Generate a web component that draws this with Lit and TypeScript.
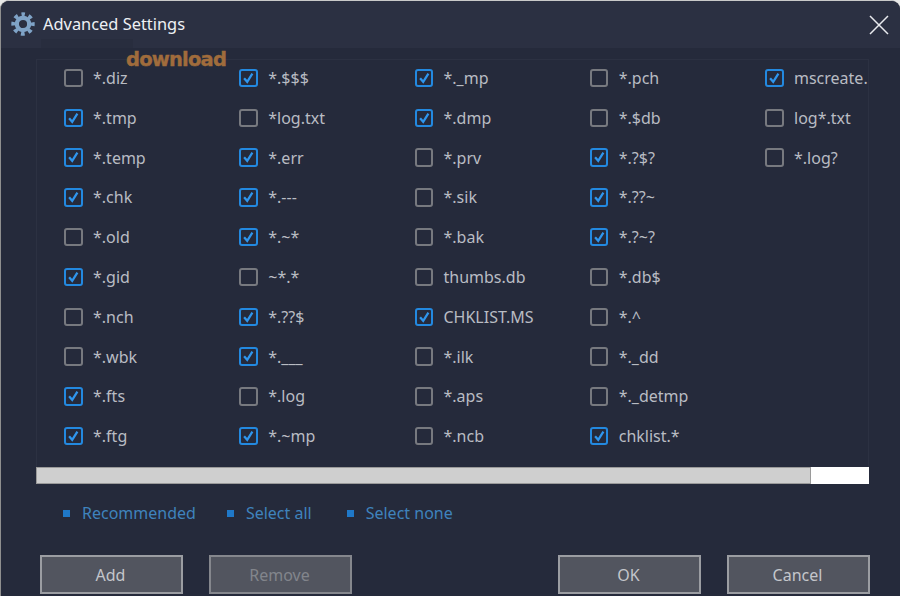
import { LitElement, html, css } from 'lit'
import { customElement } from 'lit/decorators.js'

// [label, checked], column by column
const COLUMNS: [string, boolean][][] = [
  [['*.diz', false], ['*.tmp', true], ['*.temp', true], ['*.chk', true], ['*.old', false],
   ['*.gid', true], ['*.nch', false], ['*.wbk', false], ['*.fts', true], ['*.ftg', true]],
  [['*.$$$', true], ['*log.txt', false], ['*.err', true], ['*.---', true], ['*.~*', true],
   ['~*.*', false], ['*.??$', true], ['*.___', true], ['*.log', false], ['*.~mp', true]],
  [['*._mp', true], ['*.dmp', true], ['*.prv', false], ['*.sik', false], ['*.bak', false],
   ['thumbs.db', false], ['CHKLIST.MS', true], ['*.ilk', false], ['*.aps', false], ['*.ncb', false]],
  [['*.pch', false], ['*.$db', false], ['*.?$?', true], ['*.??~', true], ['*.?~?', true],
   ['*.db$', false], ['*.^', false], ['*._dd', false], ['*._detmp', false], ['chklist.*', true]],
  [['mscreate.', true], ['log*.txt', false], ['*.log?', false]],
]

@customElement('app-root')
export class AppRoot extends LitElement {
  static styles = css`
    :host {
      display: block;
      width: 900px;
      height: 596px;
      background: #e8e8e8;
      font-family: "Noto Sans", sans-serif;
      font-size: 16px;
    }
    .window {
      position: relative;
      box-sizing: border-box;
      height: 596px;
      display: flex;
      flex-direction: column;
      background: #252a3b;
      border-top: 1px solid #c9c9c9;
      border-left: 1px solid #8f8f8f;
      border-radius: 9px 9px 0 0;
      overflow: hidden;
    }
    .title {
      box-sizing: border-box;
      height: 47px;
      flex: none;
      display: flex;
      align-items: center;
      padding: 0 11px 2px 10px;
      gap: 8px;
      background: #2b3042;
      color: #eef0f4;
      font-size: 16.4px;
    }
    .title svg.gear { width: 24px; height: 24px; flex: none; }
    .title span { flex: 1; }
    .title svg.close { width: 20px; height: 20px; flex: none; margin-top: 2px; }
    .smudge {
      position: absolute;
      left: 40px;
      top: 38px;
      width: 92px;
      height: 9px;
      background: #282d3e;
    }
    .watermark {
      position: absolute;
      left: 125px;
      top: 47px;
      font-family: "DejaVu Sans", sans-serif;
      font-weight: 700;
      font-size: 19.5px;
      letter-spacing: -0.8px;
      color: #a06c3c;
      -webkit-text-stroke: 0.4px #a06c3c;
    }
    .panel {
      box-sizing: border-box;
      flex: none;
      width: 833px;
      height: 408px;
      margin: 11px 0 0 35px;
      border: 1px solid #2c3142;
      border-bottom: none;
      overflow: hidden;
    }
    .grid {
      display: grid;
      grid-template-rows: repeat(10, 36px);
      grid-auto-flow: column;
      grid-auto-columns: 175.25px;
      row-gap: 3.8px;
      padding-left: 27px;
    }
    .item {
      display: flex;
      align-items: center;
      gap: 10.5px;
      color: #b9bcc3;
      white-space: nowrap;
    }
    .box {
      box-sizing: border-box;
      width: 18.5px;
      height: 18.5px;
      flex: none;
      border: 2px solid #77797f;
      border-radius: 3px;
    }
    .box.on { border-color: #2389e0; }
    .box svg { display: block; width: 14.5px; height: 14.5px; }
    .scrollbar {
      flex: none;
      width: 833px;
      height: 17px;
      margin-left: 35px;
      background: #fff;
    }
    .thumb {
      box-sizing: border-box;
      width: 775px;
      height: 17px;
      background: #cfcfcf;
      border: 1px solid #9a9a9a;
    }
    .links {
      flex: none;
      display: flex;
      align-items: center;
      height: 58px;
      padding-left: 62px;
      color: #3f83bd;
    }
    .link { display: flex; align-items: center; gap: 12px; margin-right: 33px; }
    .link:nth-child(2) { margin-left: -2px; margin-right: 35px; }
    .link i { width: 7px; height: 7px; background: #1f78c8; }
    .buttons {
      flex: none;
      display: flex;
      padding: 13px 0 0 39px;
    }
    button {
      box-sizing: border-box;
      width: 143px;
      height: 39px;
      font: inherit;
      color: #c4c6cb;
      background: #52555f;
      border: 2px solid #9b9da2;
      padding: 0 2px 0 0;
    }
    button + button { margin-left: 26px; }
    button.spaced { margin-left: 206px; }
    button:disabled { color: #82858c; border-color: #85878d; }
  `

  renderItem([label, checked]: [string, boolean]) {
    return html`<div class="item">
      <div class="box ${checked ? 'on' : ''}">
        ${checked
          ? html`<svg viewBox="0 0 14 14"><path d="M3 7l3 3.4L11 2.6" fill="none" stroke="#2f96ee" stroke-width="2.2"/></svg>`
          : ''}
      </div>
      <span>${label}</span>
    </div>`
  }

  render() {
    return html`
      <div class="window">
        <div class="title">
          <svg class="gear" viewBox="0 0 24 24" fill="none" stroke="#7fa3c7">
            <circle cx="12" cy="12" r="6.2" stroke-width="4.2"/>
            <circle cx="12" cy="12" r="9.5" stroke-width="4.4" stroke-dasharray="3.7 3.76" stroke-dashoffset="1.85" transform="rotate(-90 12 12)"/>
          </svg>
          <span>Advanced Settings</span>
          <svg class="close" viewBox="0 0 20 20"><path d="M1 1l18 18M19 1L1 19" stroke="#e8eaee" stroke-width="1.5" fill="none"/></svg>
        </div>
        <div class="smudge"></div>
        <div class="watermark">download</div>
        <div class="panel">
          <div class="grid">
            ${COLUMNS.map((col) => col.map((it) => this.renderItem(it)))}
          </div>
        </div>
        <div class="scrollbar"><div class="thumb"></div></div>
        <div class="links">
          <div class="link"><i></i>Recommended</div>
          <div class="link"><i></i>Select all</div>
          <div class="link"><i></i>Select none</div>
        </div>
        <div class="buttons">
          <button>Add</button>
          <button disabled>Remove</button>
          <button class="spaced">OK</button>
          <button>Cancel</button>
        </div>
      </div>
    `
  }
}
